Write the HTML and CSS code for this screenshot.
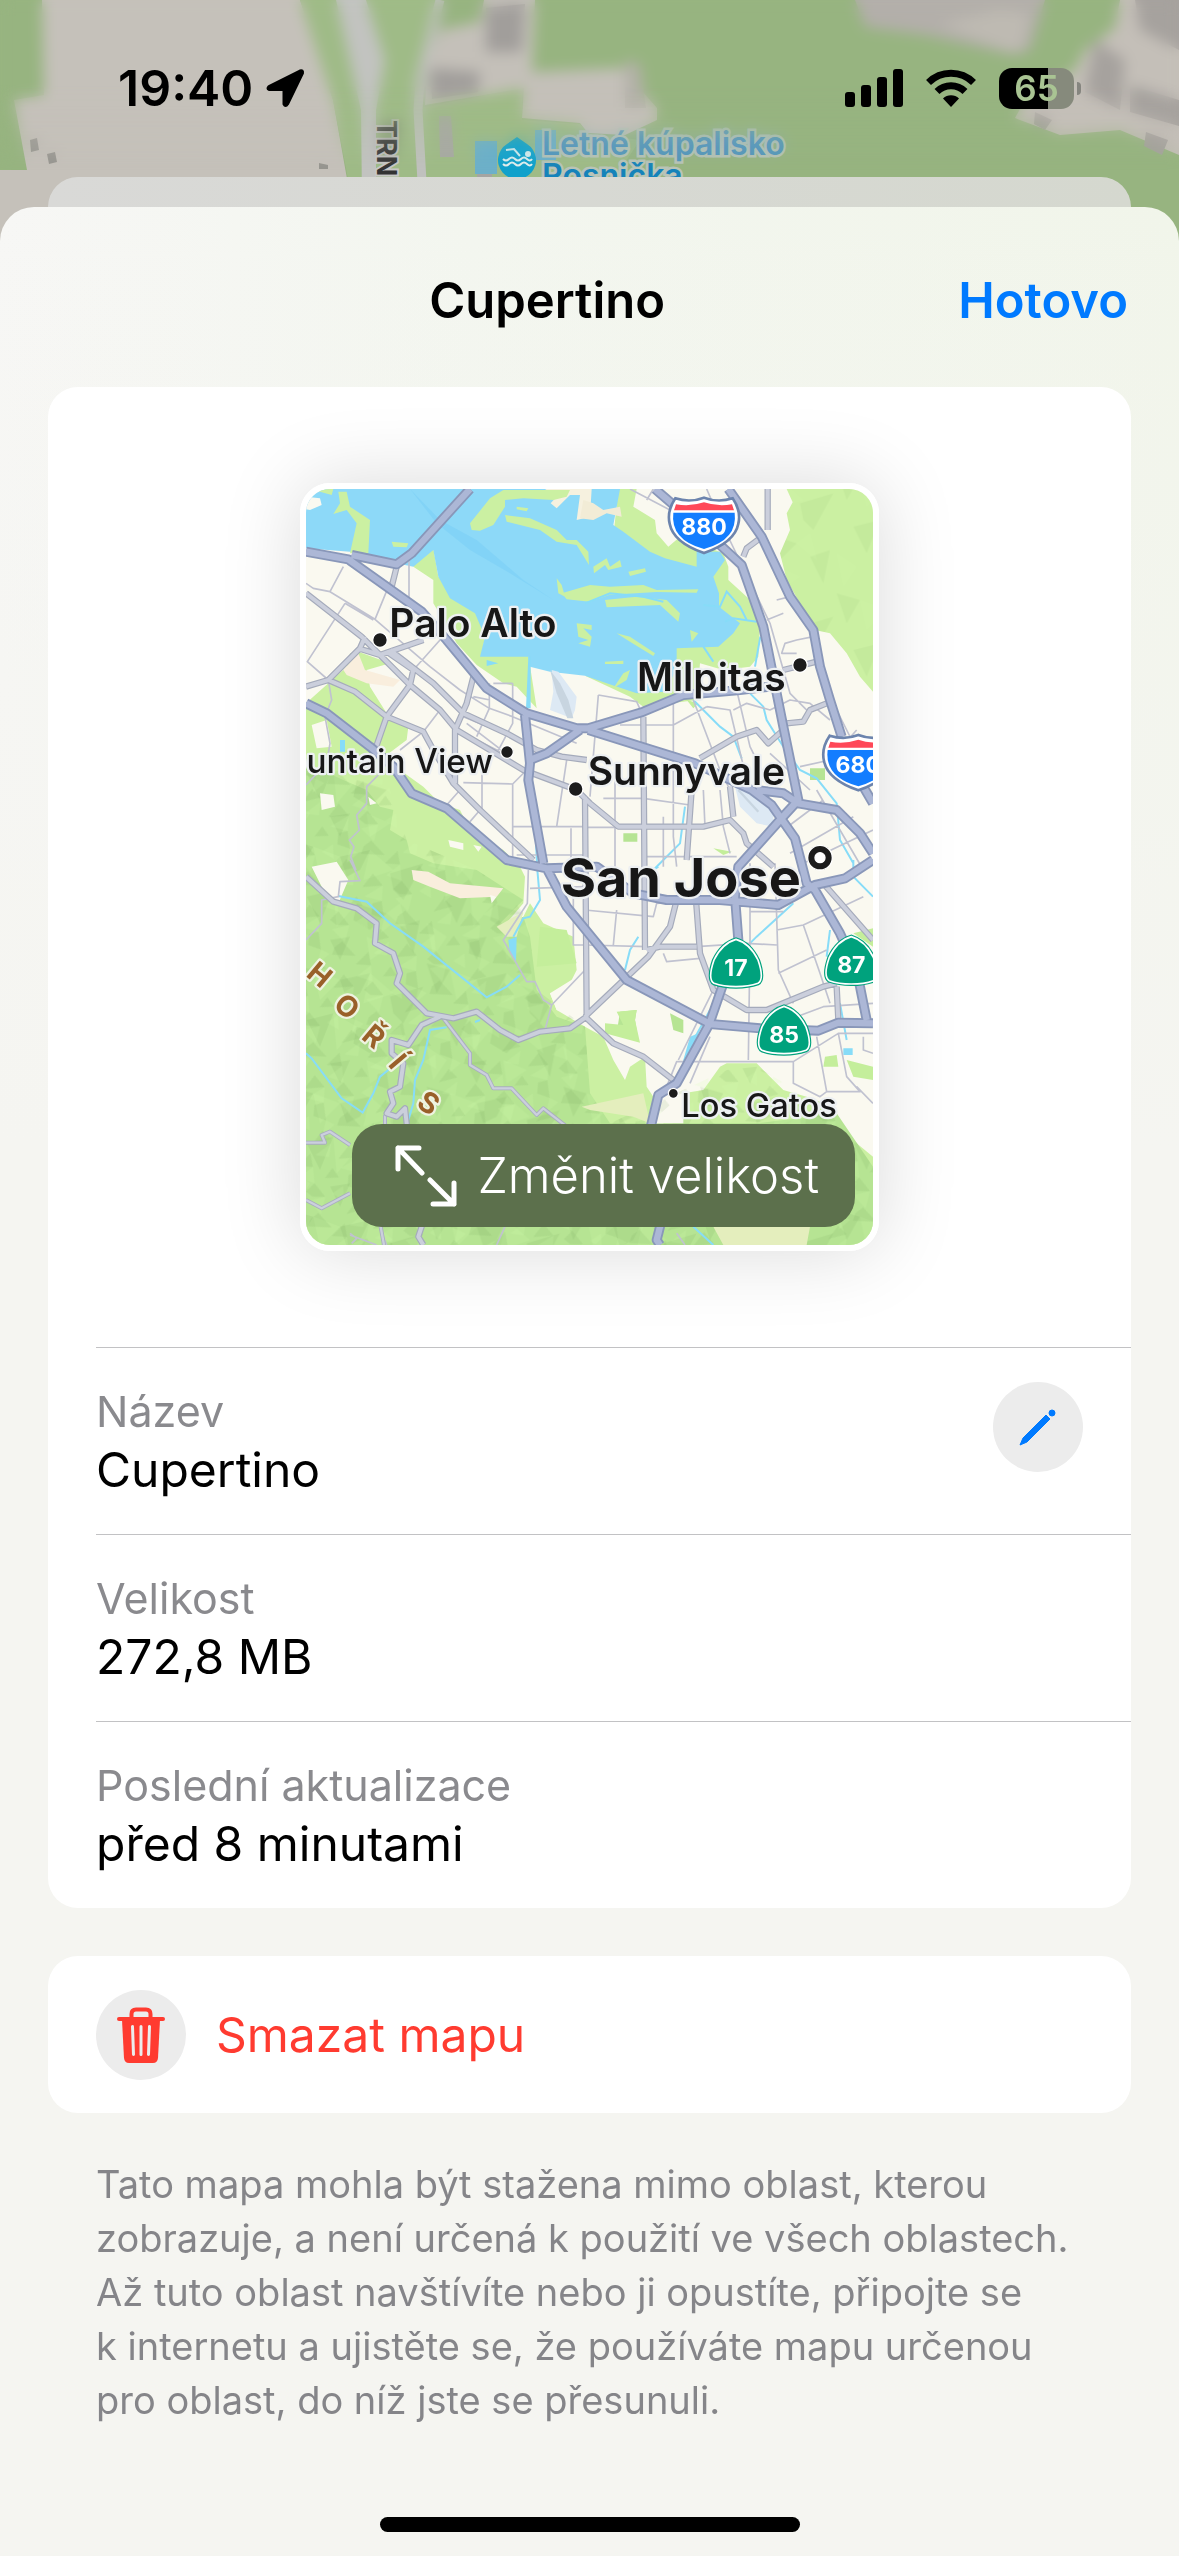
FILE: index.html
```html
<!DOCTYPE html>
<html lang="cs">
<head>
<meta charset="utf-8">
<meta name="viewport" content="width=device-width, initial-scale=1">
<title>Cupertino</title>
<link rel="stylesheet" href="styles.css">
</head>
<body>
<div class="screen">
  <svg class="backdrop" viewBox="0 0 1179 260" preserveAspectRatio="xMidYMin slice" aria-hidden="true">
    <rect width="1179" height="260" fill="#97b480"/>
    <path d="M42 0H300L333 100 352 207V260H0V170H27L14 100 44 95Z" fill="#c5c1ba"/>
    <path d="M300 0H440L428 60 417 110 422 200H352L333 100Z" fill="#9fbb87"/>
    <path d="M420 108 522 88 522 120 580 124 590 134 640 140 600 200H420Z" fill="#9fbb87"/>
    <path d="M336 0H366L385 60 376 110V200H362L361 110Z" fill="#c2c3c0"/>
    <path d="M440 0 420 80 418 110 423 200" fill="none" stroke="#c0c1be" stroke-width="9"/>
    <path d="M440 30 480 22 484 0H535L532 72 622 68 657 108V120L625 135 588 133 580 123 522 118 524 88 425 105 428 60Z" fill="#c4c0b9"/>
    <path d="M486 8 525 4 522 52 486 52ZM430 68 480 72 478 92 432 99Z" fill="#a19e9b"/>
    <path d="M625 60 640 64 646 108 625 108Z" fill="#b3b1a8"/>
    <path d="M439 116H451L454 157H440Z" fill="#a9a9a5"/>
    <path d="M30 140 37 138 39 150 31 152ZM47 154 55 152 57 162 49 164ZM319 163 328 165V169H319Z" fill="#96958f"/>
    <path d="M855 0H1045L1030 50 1015 55 925 35 865 27Z" fill="#b3afaa"/>
    <path d="M940 24 1000 10 1030 14 1022 50 1010 52Z" fill="#bebab2"/>
    <path d="M1120 0H1179V155L1120 130 1060 135 1015 118 1025 100 1075 70 1085 50 1115 28Z" fill="#c4bfb8"/>
    <path d="M1135 0H1179V50L1140 30ZM1095 40 1125 60 1120 110 1085 92ZM1130 85 1179 100V126L1130 112ZM1146 132 1168 140 1162 155 1144 146ZM1035 112 1052 120 1045 130 1034 124Z" fill="#a6a29e"/>
    <path d="M475 141H497V174H475ZM535 130H556V160H535Z" fill="#6db0c9"/>
    <path d="M477 174H492V180H477Z" fill="#a5a5a2"/>
    <path d="M517 137 527 144A19 19 0 1 1 507 144Z" fill="#10a1cb"/>
    <g fill="none" stroke="#e8f1ee" stroke-width="2">
      <path d="M506 150 514 149 520 156"/>
      <circle cx="528" cy="154" r="2" fill="#e8f1ee"/>
      <path d="M503 159q3 3 6 0t6 0 6 0 6 0 5 0M503 164q3 3 6 0t6 0 6 0 6 0 5 0"/>
    </g>
    <g class="poi-label">
      <text x="542" y="155">Letné kúpalisko</text>
      <text x="542" y="187" class="poi-label-near">Rosnička</text>
    </g>
    <text class="street-label" transform="translate(377 120) rotate(90)">TRN</text>
  </svg>
  <div class="backdrop-haze"></div>

  <header class="status">
    <div class="status-side">
      <span class="clock">19:40</span>
      <svg class="location" width="40" height="40" viewBox="0 0 40 40" aria-hidden="true"><path d="M35 3 4 18.500Q2 20.500 4 21.500H18Q19 21.500 19 22.500V36Q20.500 39 22.500 36L37.500 5Q38 2 35 3Z" stroke="#000" stroke-width="3" stroke-linejoin="round"/></svg>
    </div>
    <div class="status-side">
      <svg width="58" height="38" viewBox="0 0 58 38" aria-hidden="true"><rect y="23" width="10" height="15" rx="3"/><rect x="16" y="16" width="10" height="22" rx="3"/><rect x="32" y="8" width="10" height="30" rx="3"/><rect x="48" width="10" height="38" rx="3"/></svg>
      <svg class="wifi" width="52" height="38" viewBox="0 0 52 38" aria-hidden="true"><g fill="none" stroke="#000" stroke-width="7"><path d="M3.500 13.500a32 32 0 0 1 45 0"/><path d="M12 22.500a20 20 0 0 1 28 0"/></g><path d="M26 38 18 29.500a11.500 11.500 0 0 1 16 0Z"/></svg>
      <div class="battery"><span class="battery-level">65</span></div>
    </div>
  </header>

  <div class="sheet-behind"></div>

  <main class="sheet">
    <div class="sheet-header">
      <h1 class="sheet-title">Cupertino</h1>
      <button type="button" class="done">Hotovo</button>
    </div>

    <section class="card">
      <div class="preview">
        <div class="map-frame">
          <svg class="map" viewBox="48 57 1701 2268" role="img" aria-label="Cupertino">
            <defs>
              <pattern id="relief" width="410" height="370" patternUnits="userSpaceOnUse">
                <path d="M0 0 70 20 30 90ZM150 50 240 30 210 90 170 110ZM300 100 400 70 340 180 310 150ZM50 170 130 150 90 250ZM200 190 290 220 240 270 190 240ZM330 260 390 240 370 340ZM120 300 180 290 150 360Z" fill="#6f9e56" opacity=".12"/>
                <path d="M70 20 150 50 90 110ZM240 30 310 90 220 120ZM130 150 200 190 140 260ZM290 220 330 190 350 270ZM0 250 60 290 20 350ZM230 290 300 320 240 360Z" fill="#d5ffb0" opacity=".16"/>
              </pattern>
              <pattern id="relief-fine" href="#relief" patternTransform="rotate(64) scale(.57)"/>
              <path id="minor" d="M48 340 70 355 120 365 160 290M120 365 255 448 320 290M165 400 52 575 115 630M255 448 420 590 510 660M165 400 250 450M357 270V400M370 600 450 510M510 660 598 715 668 740 860 820M668 640V760L620 850M598 640V715L560 800M610 640H668M500 780 640 850M520 740 640 790M530 760 660 860M550 680 600 690M450 720 400 785M115 630 125 690 105 740 120 820 110 880 48 945M400 785 330 840M570 1020 540 1055M510 960 470 1005M668 940V1170M520 938 668 942 710 900M576 890V1030M668 1070H885M843 1075V1190M800 1070 830 870M680 1155H885M48 1410 95 1360V1290L145 1280 150 1235 210 1232 180 1170M715 1200 712 1300 640 1410 710 1535 735 1535 760 1590 785 1605 765 1680M785 1605 885 1500M720 1255 885 1250M850 1250V1425H885M925 675 900 980M925 675 1040 695 1060 740M990 765H1150L1250 710M1150 675V1100L1160 1190M1210 690 1290 900 1320 960M885 1072H985M975 900V1240M940 985 1060 985 1200 1005M1240 960 1245 1070M1290 960 1300 1070 1320 1150M1060 1160H1340M1120 1190V1040M1330 720 1370 700 1440 720 1500 690 1560 700 1620 750M1250 710 1320 720 1370 930M1340 660 1380 830 1430 930M1440 850 1560 960M1530 890 1620 870 1700 780M1580 960 1720 1200M1480 1080 1600 990M1500 1150 1690 1040M1540 1180 1749 1080M1020 57 1140 120 1160 160M1070 90 1090 57M1250 57 1290 150 1440 460 1500 670 1560 730M1460 390 1500 380M1430 450 1480 430M1520 550 1475 550 1485 520 1520 510 1570 500M1570 500 1640 720 1700 840M885 1320 1090 1340 1100 1300 1340 1280M970 1425 980 1320M885 1425 1070 1430M1220 1430 1370 1420 1460 1425M1120 1450 1130 1475 1230 1465M1380 1180V1420L1375 1770M1455 1180 1465 1500 1510 1600M1460 1380 1540 1365 1720 1280M1465 1510 1610 1440M1380 1325H1480M1540 1365 1590 1510 1620 1600M1130 1850 1160 1775H1510M1165 1770 1290 1520M1200 1840 1260 1700M1510 1775V1840L1590 1880 1610 1865H1710L1670 1820 1645 1690H1749M1510 1775 1645 1690M1580 1700 1610 1865M1720 1700V1740L1749 1750M1700 1850 1749 1900M1520 1640 1600 1610 1749 1600M265 2085 230 2110 225 2160 290 2325M180 2290 200 2305 185 2320M260 2325 180 2295M645 2270 620 2325M1160 2290 1185 2325M265 915 230 950V1000L200 1035 208 1080 178 1110 192 1130 182 1160 198 1200"/>
              <path id="major" d="M48 370 215 500 360 645 450 720 500 780 700 900 860 960 900 1000 985 1070H1240L1320 1050 1360 1090 1370 1120 1450 1190M48 650 115 630 210 535 225 500M115 630 195 665 290 740 400 785 430 840 490 940 570 1020 730 1170M255 840 290 740 360 645 370 600 290 545M205 535 270 555 400 510M300 540 430 640 520 730 650 790 740 840 815 860 890 870M495 940V780L530 700 550 620M305 350 320 290M885 980 890 1640M1060 740 1065 1440M1205 960 1190 1170M1215 1250 1230 1450 1270 1560 1370 1620H1430L1600 1550 1640 1540M885 1640 1075 1460 1140 1370 1160 1290M885 1640 970 1720 1060 1760 1150 1830M1070 1440 1110 1430H1220M1230 865 1340 800 1400 780 1435 820 1480 780M1320 950 1330 1040M1490 760 1540 755 1560 720 1610 700M1360 260 1370 235 1410 205M1433 57V180M1640 1550 1645 1650M1600 1240 1749 1410M1480 600 1580 575M48 1220 130 1295 200 1315 260 1360 255 1420 310 1450 330 1510 320 1540 410 1630 490 1645 560 1625 630 1680 685 1710 750 1685 840 1675 890 1640M450 1640 395 1665 355 1725 305 1710 305 1750 340 1780 330 1850 300 1865 310 1900 290 1930 320 1940 345 1915 350 1960 350 2110 395 2270 385 2300 400 2325"/>
              <path id="lane" d="M460 1645 540 1750V1785L590 1815 610 1855H665L740 1935 760 1915 830 1970M48 2018H105L95 1995 120 1985 180 2025M48 2190 95 2215 180 2170M272 2270 282 2325M285 1935V1970"/>
              <path id="freeway" d="M48 245 175 268 395 425 470 510 590 655 710 730 860 775 895 775 1060 725 1180 675 1350 660 1440 650M185 255 320 283 365 250 540 57M895 780 1070 835 1215 880 1385 960 1445 1005 1515 1105 1550 1240 1575 1260 1650 1390 1700 1500 1730 1650M48 700 110 730 240 830 310 890 365 970 470 1015 650 1170 770 1195 830 1310 1010 1530 1260 1662 1410 1675 1585 1682 1645 1658 1749 1660M705 735 720 880 715 930 760 1180M720 870 770 850 870 780M1095 57 1285 220 1355 285 1420 470 1480 770 1525 990 1470 1050 1345 1190 1335 1280 1345 1410 1258 1662 1160 1840 1105 1875 1080 1980 1110 2240 1110 2270 1100 2310 1110 2325M1315 57 1415 200 1500 380 1570 480 1590 590 1620 690 1655 800M1720 950 1749 1000M1400 960 1480 970 1525 1000 1640 1020 1710 1090 1749 1150M770 1195 920 1190 1030 1270 1130 1290H1290L1465 1305 1575 1245 1665 1225 1749 1170"/>
              <g id="interstate">
                <path d="M-86-80Q-42-66 0-82 42-66 86-80 112-42 103-4 92 52 0 84-92 52-103-4-112-42-86-80Z" fill="#fff" stroke="#6c84ad" stroke-width="8"/>
                <path d="M-84-62Q-42-54 0-68 42-54 84-62L90-44H-90Z" fill="#ff4858"/>
                <path d="M-92-37H92Q102 44 0 72-102 44-92-37Z" fill="#137dff"/>
              </g>
              <path id="state-route" d="M0-72Q42-60 66-10 86 48 66 60 38 70 0 70-38 70-66 60-86 48-66-10-42-60 0-72Z" fill="#00a27d"/>
            </defs>
            <rect x="48" y="57" width="1701" height="2268" fill="#faf9f0"/>
            <path d="M430 235 445 320 555 405 585 500 575 555H715L740 715 680 650 640 640 560 585 500 520 430 400V330L370 290 375 260ZM985 57H1040L1030 110 1095 150 1100 190 1135 230 1170 200 1300 250 1315 290V330L1375 385 1410 460 1405 560 1380 590 1300 600 1230 580 1220 690 1060 710 1020 680 885 617 1100 560 1200 400 970 200ZM1490 57H1749V665L1710 620 1670 550 1620 490 1575 480 1530 400 1490 330 1470 250 1500 180 1490 130 1508 97Z" fill="#cbf0a2"/>
            <path d="M1490 57H1749V665L1710 620 1670 550 1620 490 1575 480 1530 400 1490 330 1470 250 1500 180 1490 130 1508 97Z" fill="url(#relief)" opacity=".6"/>
            <path d="M48 57H990L970 165 1000 185 1080 245 1125 265 1220 290V245L1290 245 1305 270 1270 320 1287 370V410L1350 460 1330 490 1285 530 1160 535V590L1130 665 1040 670 950 640 885 617 780 605 720 590 715 560H570L585 500 555 430 480 385 445 320 430 240 370 290 320 280 180 245 48 235Z" fill="#8dd9f8"/>
            <path d="M360 57 450 150 560 210 700 330 790 390 660 310 540 240 440 160Z" fill="#74cbf5" opacity=".4"/>
            <path d="M765 57H905L900 140 860 150 870 75 840 75 800 115 782 100 800 80Z" fill="#f6f1df"/>
            <path d="M880 90 910 100 940 120 990 110 995 140 950 130 910 150 870 145Z" fill="#f2ecd6"/>
            <path d="M48 80 90 85 95 105 60 120 48 118Z" fill="#faf9f0"/>
            <path d="M60 57H130L125 75 90 65ZM145 65H170L180 110 240 150 235 250H180L200 160 170 120 130 132 150 100ZM540 160 600 85 640 60H840L830 80 790 90 700 85 645 90V110L610 165 570 182 545 180ZM645 135 720 145 800 180 830 210 860 210 895 245 897 285 860 225 800 215 750 180 650 155ZM305 215 355 220 350 232 310 230ZM680 110 715 115 710 124 680 118ZM815 370 900 345 960 350 1060 345 1100 360 1225 358 1220 368 1100 366 960 374 900 395 830 388ZM945 390 1040 380 1130 390 1170 430 1165 455 1110 405 950 412ZM800 325 815 345 825 380 805 370ZM1015 305 1065 295 1068 305 1020 318ZM860 460 905 465 905 480 880 475 905 500 900 530 865 520 895 510 865 500ZM980 490 1020 500 1095 550 1090 558 1020 515ZM945 575 1000 572 1000 582 945 582ZM970 655 1000 610 1020 600 1010 630ZM1200 480 1225 490 1205 515ZM910 290 950 265 960 290 990 270 995 290 955 300 945 285 912 310Z" fill="#cbf0a2"/>
            <path d="M590 570 625 580 590 588ZM715 560H722V715H708Z" fill="#87dcf8"/>
            <path d="M785 600 805 605 860 680 855 720 845 745 780 720 790 665ZM1335 950 1400 960 1450 1010 1450 1070 1400 1060 1350 1010Z" fill="#dde9f4"/>
            <path d="M780 600 810 640 835 690 850 745 832 745 800 670Z" fill="#c8d5e0"/>
            <path d="M1345 960 1405 1025" stroke="#c8d5e0" stroke-width="7"/>
            <path d="M48 700 115 640 170 590 180 550 205 545 300 580 230 600 240 650 290 730 355 770 350 810 270 870 330 900 400 950 450 1000 510 1020 540 1080 640 1140 690 1190 705 1220 700 1300 640 1370 700 1340 720 1300 760 1360 850 1400 860 1500 830 1560 780 1570 800 1620 885 1670 940 1700 970 1770 1005 1830 1020 1790 1065 1760 1070 1850 1090 1880 1070 1960 1100 1990 1120 1960 1180 1870 1240 1860 1290 1790 1310 1780H1400L1480 1860 1550 1880 1630 1910 1640 1970 1749 2060V2325H48Z" fill="#cbf0a2"/>
            <path d="M48 880 160 930 230 960 270 1010 310 1020 300 1080 350 1110 360 1150 430 1180 560 1200 700 1290 620 1370 700 1340 720 1400 740 1560 800 1640 885 1670 900 1870 960 1960 1280 1960 1400 1960 1640 1930 1749 2090V2325H48ZM990 1625 1040 1620 1035 1650 1045 1710 980 1690ZM1140 1630 1180 1650V1690L1150 1680ZM1000 1090H1042V1115H1000ZM1560 895H1605V930H1560Z" fill="#b6e493"/>
            <path d="M980 1625 1040 1620 1035 1650 1050 1718 945 1690 945 1660 1000 1665ZM1605 1760 1640 1755 1645 1790 1600 1790ZM1670 1770 1749 1790V1830L1690 1820ZM1690 1390 1749 1375V1430ZM1270 1135 1325 1145 1300 1155ZM1190 690 1225 700 1210 715ZM750 1370 830 1380 860 1480 740 1490Z" fill="#c4ee9b"/>
            <path id="hills" d="M48 880 290 930 350 1110 560 1200 700 1290 720 1400 740 1560 885 1670 900 1870 960 1960 1310 1800 1400 1790 1550 1880 1640 1930 1749 2090V2325H48Z" fill="url(#relief)"/>
            <path d="M48 880 290 930 350 1110 560 1200 700 1290 720 1400 740 1560 885 1670 900 1870 960 1960 1310 1800 1400 1790 1550 1880 1640 1930 1749 2090V2325H48Z" fill="url(#relief-fine)"/>
            <path d="M160 600 205 550 225 600 330 630 310 650 230 640 170 615ZM365 1200 415 1205 480 1240 640 1255 620 1280 510 1285 420 1250 370 1230Z" fill="#f9eedd"/>
            <path d="M65 765 110 750 125 830 80 835ZM90 970 130 975 135 1010 95 1020ZM235 980 260 1000 240 1005ZM475 1110 520 1120 520 1140 480 1130ZM550 1125 575 1130 565 1145ZM65 1190 140 1175 175 1230 145 1300 100 1260ZM600 1275 620 1280 605 1300ZM780 1570 860 1520 885 1500V1640L800 1620ZM1100 1940 1180 1870 1180 1960H1090Z" fill="#faf9f0"/>
            <path d="M620 1370 700 1325 680 1400 650 1400ZM875 1910 1060 1870 1080 1960 1030 1940 900 1920ZM1270 2270H1560L1550 2325H1300Z" fill="#e4eebd"/>
            <path d="M655 1410 680 1400 678 1480 660 1450ZM1225 1690 1215 1740 1190 1780 1180 1770 1200 1700ZM150 810H165V845H150ZM1660 1735H1688V1755H1660Z" fill="#87dcf8"/>
            <path d="M145 1278 230 1295 300 1360 400 1430 590 1582 650 1550 690 1515M48 1750 65 1765 155 1885 218 1928 250 1870 270 1820 320 1780M570 1650 555 1656M470 1672 420 1680 400 1770 375 1830 370 1900 355 1950M738 1120 742 1200 750 1290 720 1340 700 1345 670 1400M1210 690 1290 770 1330 800 1355 865M1380 670 1420 710 1430 750 1480 830 1530 900 1580 925 1640 1000 1650 1110 1690 1180M1690 1170V1220L1749 1280M1411 500 1395 590M1305 455 1330 445 1400 455M1240 405 1290 410 1310 365 1350 410 1370 450M1240 530 1270 575M885 400 960 370 1060 380 1120 395M1185 1010 1170 1120 1090 1200M1510 1300 1400 1400 1370 1430M1045 1400 1020 1440 1005 1500M1260 1620 1200 1730 1180 1780M1090 1200 1105 1190M1620 1380 1610 1460M1650 1600 1670 1710M1210 2270 1270 2325" fill="none" stroke="#87dcf8" stroke-width="6"/>
            <g fill="none" stroke-linejoin="round">
              <use href="#minor" stroke="#c0c2d0" stroke-width="5"/>
              <use href="#lane" stroke="#a9adc0" stroke-width="12"/>
              <use href="#lane" stroke="#cbcfdd" stroke-width="7"/>
              <use href="#major" stroke="#a5abbb" stroke-width="19"/>
              <use href="#major" stroke="#cbcfdc" stroke-width="12"/>
              <use href="#freeway" stroke="#8997b9" stroke-width="30"/>
              <use href="#freeway" stroke="#acb7d6" stroke-width="19"/>
            </g>
            <use href="#interstate" x="1242" y="165"/>
            <use href="#interstate" x="1705" y="877"/>
            <g class="route">
              <use href="#state-route" x="1338" y="1480"/><use href="#state-route" x="1482" y="1681"/><use href="#state-route" x="1684" y="1472"/>
            </g>
            <g class="route-inner">
              <use href="#state-route" x="1338" y="1480"/><use href="#state-route" x="1482" y="1681"/><use href="#state-route" x="1684" y="1472"/>
            </g>
            <g class="route-number">
              <text x="1242" y="196">880</text>
              <text x="1705" y="908">680</text>
              <text x="1338" y="1517">17</text>
              <text x="1482" y="1718">85</text>
              <text x="1684" y="1509">87</text>
            </g>
            <g class="town">
              <text x="298" y="500">Palo Alto</text>
              <text x="1487" y="662" text-anchor="end">Milpitas</text>
              <text x="893" y="945">Sunnyvale</text>
            </g>
            <text class="town town-light" x="609" y="908" text-anchor="end">Mountain View</text>
            <text class="town town-small" x="1174" y="1942">Los Gatos</text>
            <text class="town town-large" x="812" y="1280">San Jose</text>
            <g class="range">
              <text transform="translate(88 1515) rotate(40)" y="29">H</text>
              <text transform="translate(170 1610) rotate(42)" y="29">O</text>
              <text transform="translate(251 1700) rotate(40)" y="29">Ř</text>
              <text transform="translate(322 1775) rotate(50)" y="29">Í</text>
              <text transform="translate(415 1900) rotate(34)" y="29">S</text>
            </g>
            <g fill="#1c1c1c" stroke="#fff" stroke-width="4">
              <circle cx="270" cy="510" r="22"/><circle cx="651" cy="846" r="19"/><circle cx="857" cy="957" r="22"/><circle cx="1530" cy="585" r="22"/><circle cx="1150" cy="1870" r="15"/><circle cx="1590" cy="1163" r="37"/>
              <circle cx="1590" cy="1163" r="15" fill="#fff"/>
            </g>
          </svg>
          <button type="button" class="resize">
            <svg width="62" height="62" viewBox="0 0 62 62" fill="none" stroke="#fff" stroke-width="5" stroke-linecap="round" stroke-linejoin="round" aria-hidden="true"><path d="M24 3H3V24M3 3 27 28M38 59H59V38M59 59 35 35"/></svg>
            <span>Změnit velikost</span>
          </button>
        </div>
      </div>
      <div class="details">
        <div class="row">
          <dl class="field"><dt>Název</dt><dd>Cupertino</dd></dl>
          <button type="button" class="round" aria-label="Upravit název">
            <svg width="90" height="90" viewBox="0 0 90 90" fill="#007aff" stroke="#007aff" aria-hidden="true"><path d="M27 63 30 56 53 33 57 37 34 60Z"/><circle cx="59" cy="31" r="3"/></svg>
          </button>
        </div>
        <div class="row"><dl class="field"><dt>Velikost</dt><dd>272,8 MB</dd></dl></div>
        <div class="row"><dl class="field"><dt>Poslední aktualizace</dt><dd>před 8 minutami</dd></dl></div>
      </div>
    </section>

    <button type="button" class="card delete">
      <span class="round">
        <svg width="90" height="90" viewBox="0 0 90 90" aria-hidden="true">
          <path d="M35.500 30V24Q35.500 19.500 40 19.500H50Q54.500 19.500 54.500 24V30" fill="none" stroke="#ff3b30" stroke-width="4"/>
          <rect x="21" y="27" width="48" height="4" rx="2" fill="#ff3b30"/>
          <path d="M26 30H64L62 68Q61.500 73 57 73H33Q28.500 73 28 68Z" fill="#ff3b30"/>
          <path d="M36.500 36.500 37.500 64.500M45 36.500V64.500M53.500 36.500 52.500 64.500" stroke="#ececec" stroke-width="3" stroke-linecap="round"/>
        </svg>
      </span>
      <span>Smazat mapu</span>
    </button>

    <p class="note">Tato mapa mohla být stažena mimo oblast, kterou zobrazuje, a není určená k použití ve všech oblastech. Až tuto oblast navštívíte nebo ji opustíte, připojte se k&nbsp;internetu a ujistěte se, že používáte mapu určenou pro oblast, do níž jste se přesunuli.</p>

    <div class="home-indicator"></div>
  </main>
</div>
</body>
</html>
```
FILE: styles.css
```css
* {
  box-sizing: border-box;
}

body {
  margin: 0;
  background: #c5c1ba;
  color: #000;
  font-family: Inter, "Liberation Sans", sans-serif;
}

button {
  border: 0;
  padding: 0;
  background: none;
  color: inherit;
  font: inherit;
}

svg {
  display: block;
  flex: none;
}

.screen {
  position: relative;
  display: flex;
  flex-direction: column;
  min-height: 100vh;
}

/* Map behind the sheets, blurred under the status bar */
.backdrop {
  position: absolute;
  top: 0;
  left: 0;
  width: 100%;
  height: 260px;
}

.backdrop-haze {
  position: absolute;
  inset: 0 0 auto;
  height: 170px;
  backdrop-filter: blur(7px);
  mask-image: linear-gradient(#000 50%, transparent);
}

.poi-label {
  font-size: 32px;
  font-weight: 600;
  fill: #4d93bd;
  stroke: #b9c4b8;
  stroke-width: 5px;
  paint-order: stroke;
}

.poi-label-near {
  fill: #1583ba;
}

.street-label {
  font-size: 27px;
  font-weight: 700;
  fill: #333;
  stroke: #c8c8c6;
  stroke-width: 4px;
  paint-order: stroke;
}

/* Status bar */
.status {
  position: relative;
  display: flex;
  justify-content: space-between;
  height: 177px;
  padding: 58px 98px 0 118px;
}

.status-side {
  display: flex;
  align-items: center;
  height: 60px;
}

.clock {
  font-size: 50px;
  font-weight: 600;
}

.location {
  margin-left: 12px;
}

.wifi {
  margin: 0 22px;
}

.battery {
  position: relative;
  display: flex;
  align-items: center;
  justify-content: center;
  width: 75px;
  height: 41px;
  margin-right: 7px;
  border-radius: 13px;
  background: linear-gradient(90deg, #000 65%, #868a7c 65%);
  color: #a9c493;
  font-size: 35px;
  font-weight: 600;
}

.battery::after {
  content: "";
  position: absolute;
  right: -7px;
  width: 4px;
  height: 13px;
  border-radius: 0 6px 6px 0;
  background: #85857f;
}

/* Sheets */
.sheet-behind {
  position: relative;
  height: 60px;
  margin: 0 48px -30px;
  border-radius: 30px 30px 0 0;
  background: linear-gradient(90deg, #d9d9d7, #d5d8cf);
}

.sheet {
  position: relative;
  flex: 1;
  display: flex;
  flex-direction: column;
  padding: 0 48px 24px;
  border-radius: 34px 34px 0 0;
  background: linear-gradient(180deg, transparent, #f5f5f1 40%), linear-gradient(90deg, #f7f7f5, #f3f6ef 40%, #f1f5ea);
  background-color: #f5f5f1;
}

.sheet-header {
  display: flex;
  align-items: center;
  height: 180px;
  padding: 8px 3px 0 88px;
}

.sheet-title {
  flex: 1;
  margin: 0;
  text-align: center;
  font-size: 49px;
  line-height: 60px;
  font-weight: 600;
}

.done {
  color: #007aff;
  font-size: 49px;
  line-height: 60px;
  font-weight: 600;
}

.card {
  border-radius: 30px;
  background: #fff;
  overflow: hidden;
}

.preview {
  display: flex;
  justify-content: center;
  padding: 96px 24px;
}

.map-frame {
  position: relative;
  width: 579px;
  border: 6px solid #fff;
  border-radius: 30px;
  box-shadow: 0 0 80px rgba(0, 0, 0, 0.15);
}

.map {
  width: 100%;
  border-radius: 24px;
}

.resize {
  position: absolute;
  right: 18px;
  bottom: 18px;
  display: flex;
  align-items: center;
  gap: 20px;
  height: 103px;
  padding: 0 36px 0 43px;
  border-radius: 30px;
  background: #5c704c;
  color: #fff;
  font-size: 49px;
  font-weight: 300;
  white-space: nowrap;
}

/* Map lettering */
.town {
  font-size: 117px;
  font-weight: 600;
  fill: #171717;
  stroke: #edf0f2;
  stroke-width: 14px;
  stroke-linejoin: round;
  paint-order: stroke;
}

.town-light {
  font-size: 100px;
  font-weight: 500;
}

.town-small {
  font-size: 98px;
  font-weight: 500;
}

.town-large {
  font-size: 162px;
  font-weight: 700;
}

.range {
  font-size: 86px;
  font-weight: 700;
  text-anchor: middle;
  fill: #996029;
  stroke: #eef3e0;
  stroke-width: 14px;
  stroke-linejoin: round;
  paint-order: stroke;
}

.route {
  stroke: #00a27d;
  stroke-width: 12px;
}

.route-inner {
  stroke: #fff;
  stroke-width: 5px;
}

.route-number {
  font-size: 69px;
  font-weight: 700;
  text-anchor: middle;
  fill: #fff;
}

/* Details */
.details {
  padding-left: 48px;
}

.row {
  display: flex;
  justify-content: space-between;
  padding: 34px 48px 34px 0;
  border-top: 1px solid #c2c2c4;
}

.field {
  margin: 0;
}

.field dt {
  color: #8a8a8e;
  font-size: 43px;
  line-height: 58px;
}

.field dd {
  margin: 0;
  font-size: 48px;
  line-height: 60px;
}

.round {
  flex: none;
  width: 90px;
  height: 90px;
  border-radius: 50%;
  background: #ececec;
}

.delete {
  display: flex;
  align-items: center;
  gap: 30px;
  min-height: 157px;
  margin-top: 48px;
  padding: 0 48px;
  color: #ff3b30;
  font-size: 48px;
  text-align: left;
}

.note {
  margin: 44px 36px 0 48px;
  color: #858589;
  font-size: 38px;
  line-height: 54px;
}

.home-indicator {
  width: 420px;
  height: 15px;
  margin: auto auto 0;
  border-radius: 8px;
  background: #000;
}
```
